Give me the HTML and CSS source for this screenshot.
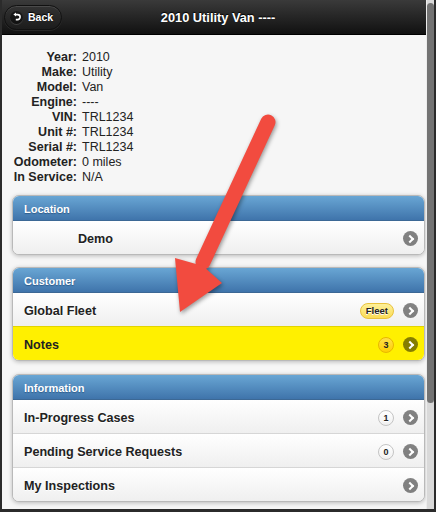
FILE: index.html
```html
<!DOCTYPE html>
<html lang="en">
<head>
    <meta charset="UTF-8">
    <meta name="viewport" content="width=device-width, initial-scale=1.0">
    <title>2010 Utility Van</title>
    <link rel="stylesheet" href="styles.css">
</head>
<body>
<div class="screen">
    <div class="page">
        <div class="header">
            <a class="back-btn" href="#">
                <span class="back-icon">
                    <svg width="12" height="12" viewBox="0 0 12 12">
                        <path d="M4.6 3.6 H6.6 A2.5 2.5 0 0 1 6.6 8.6 H4.8" fill="none" stroke="#fff" stroke-width="1.6"/>
                        <path d="M2.4 3.6 L5 1.6 L5 5.6 Z" fill="#fff"/>
                    </svg>
                </span>
                Back
            </a>
            <h1 class="title">2010 Utility Van ----</h1>
        </div>

        <div class="content">
            <dl class="specs">
                <dt>Year:</dt><dd>2010</dd>
                <dt>Make:</dt><dd>Utility</dd>
                <dt>Model:</dt><dd>Van</dd>
                <dt>Engine:</dt><dd>----</dd>
                <dt>VIN:</dt><dd>TRL1234</dd>
                <dt>Unit #:</dt><dd>TRL1234</dd>
                <dt>Serial #:</dt><dd>TRL1234</dd>
                <dt>Odometer:</dt><dd>0 miles</dd>
                <dt>In Service:</dt><dd>N/A</dd>
            </dl>

            <div class="card">
                <div class="card-head">Location</div>
                <ul class="card-list">
                    <li class="row"><span class="label indent">Demo</span><span class="go"></span></li>
                </ul>
            </div>

            <div class="card">
                <div class="card-head">Customer</div>
                <ul class="card-list">
                    <li class="row"><span class="label">Global Fleet</span><span class="badge">Fleet</span><span class="go"></span></li>
                    <li class="row row-notes"><span class="label">Notes</span><span class="count count-yellow">3</span><span class="go"></span></li>
                </ul>
            </div>

            <div class="card card-info">
                <div class="card-head">Information</div>
                <ul class="card-list">
                    <li class="row"><span class="label">In-Progress Cases</span><span class="count">1</span><span class="go"></span></li>
                    <li class="row"><span class="label">Pending Service Requests</span><span class="count">0</span><span class="go"></span></li>
                    <li class="row"><span class="label">My Inspections</span><span class="go"></span></li>
                </ul>
            </div>
        </div>
    </div>

    <div class="scrollbar"><div class="thumb"></div></div>

    <svg class="pointer" width="436" height="512" viewBox="0 0 436 512">
        <line x1="268" y1="122" x2="203" y2="262" stroke="#f24b3f" stroke-width="15" stroke-linecap="round"/>
        <polygon points="175,258 203,266 222,283 180,312" fill="#f24b3f"/>
    </svg>
</div>
</body>
</html>
```

FILE: styles.css
```css
* {
    box-sizing: border-box;
}
body {
    margin: 0;
    font-family: "Liberation Sans", Arial, sans-serif;
}
.screen {
    position: relative;
    width: 436px;
    height: 512px;
    display: flex;
    border-left: 2px solid #2b2b2b;
    border-right: 2px solid #2b2b2b;
    border-bottom: 3px solid #2b2b2b;
    overflow: hidden;
}
.page {
    flex: 1;
    background: #f6f6f6;
}
.scrollbar {
    width: 8px;
    background: #d9d9d9;
    border-left: 1px solid #ececec;
    padding-top: 3px;
}
.thumb {
    height: 400px;
    background: #737373;
    border-radius: 4px;
}

/* header bar */
.header {
    height: 35px;
    display: flex;
    align-items: center;
    background: linear-gradient(#3a3a3a, #111);
    border-bottom: 1px solid #000;
    padding-left: 2px;
}
.back-btn {
    display: flex;
    align-items: center;
    gap: 5px;
    height: 25px;
    padding: 0 8px 0 5px;
    border: 1px solid #111;
    border-radius: 13px;
    background: linear-gradient(#333, #1c1c1c);
    box-shadow: inset 0 1px 0 rgba(255, 255, 255, 0.12), 0 1px 0 rgba(255, 255, 255, 0.08);
    color: #fff;
    font-size: 10.5px;
    font-weight: bold;
    text-decoration: none;
    text-shadow: 0 -1px 1px #000;
}
.back-icon {
    width: 13px;
    height: 13px;
    border-radius: 50%;
    background: rgba(0, 0, 0, 0.45);
    box-shadow: 0 1px 0 rgba(255, 255, 255, 0.15);
    display: flex;
    align-items: center;
    justify-content: center;
}
.title {
    flex: 1;
    margin: 0;
    padding-right: 52px;
    text-align: center;
    color: #fff;
    font-size: 12.8px;
    font-weight: bold;
    text-shadow: 0 -1px 1px #000;
}

/* content */
.content {
    padding: 15px 1px 0 10px;
}
.specs {
    margin: 0 0 10px -10px;
    display: grid;
    grid-template-columns: 75px auto;
    column-gap: 5px;
    font-size: 12.5px;
    line-height: 15px;
    color: #222;
}
.specs dt {
    font-weight: bold;
    text-align: right;
}
.specs dd {
    margin: 0;
}

.card {
    border: 1px solid #b9b9b9;
    border-radius: 7px;
    overflow: hidden;
    box-shadow: 0 1px 4px rgba(0, 0, 0, 0.25);
    margin-bottom: 12px;
    background: #fff;
}
.card-info {
    margin-top: 13px;
}
.card-head {
    height: 25px;
    padding: 1px 0 0 11px;
    display: flex;
    align-items: center;
    background: linear-gradient(#69a6d4, #3f74ab);
    border-bottom: 1px solid #3c6895;
    color: #fff;
    font-size: 11px;
    font-weight: bold;
    text-shadow: 0 1px 1px #2f5d8c;
}
.card-list {
    list-style: none;
    margin: 0;
    padding: 0;
}
.row {
    height: 34px;
    display: flex;
    align-items: center;
    padding: 2px 6px 0 11px;
    border-top: 1px solid #d6d6d6;
    background: linear-gradient(#fff, #efefef);
    color: #222;
    font-size: 12.6px;
    font-weight: bold;
    text-shadow: 0 1px 0 #fff;
}
.card-list .row:first-child {
    border-top: none;
    height: 33px;
}
.row-notes {
    background: #fff000;
    border-top-color: #e2d400;
    text-shadow: none;
}
.label {
    flex: 1;
}
.indent {
    padding-left: 54px;
}
.count {
    width: 16px;
    height: 16px;
    margin-right: 9px;
    border-radius: 50%;
    border: 1px solid #c4c4c4;
    background: linear-gradient(#fff, #f0f0f0);
    display: flex;
    align-items: center;
    justify-content: center;
    font-size: 9px;
    font-weight: bold;
    color: #222;
}
.count-yellow {
    border-color: #e8b600;
    background: linear-gradient(#ffe04a, #ffcf00);
}
.badge {
    height: 16px;
    padding: 0 5px;
    margin-right: 9px;
    border-radius: 8px;
    border: 1px solid #e9c23c;
    background: linear-gradient(#fdf09a, #fbdc55);
    display: flex;
    align-items: center;
    font-size: 9.5px;
    font-weight: bold;
    color: #222;
}
.go {
    width: 15px;
    height: 15px;
    border-radius: 50%;
    background: rgba(0, 0, 0, 0.48);
    position: relative;
}
.go::after {
    content: "";
    position: absolute;
    left: 4px;
    top: 4.5px;
    width: 4px;
    height: 4px;
    border-right: 2px solid #fff;
    border-top: 2px solid #fff;
    transform: rotate(45deg);
}

.pointer {
    position: absolute;
    left: -2px;
    top: 0;
    pointer-events: none;
    filter: drop-shadow(1px 2px 2px rgba(0, 0, 0, 0.4));
}
```
